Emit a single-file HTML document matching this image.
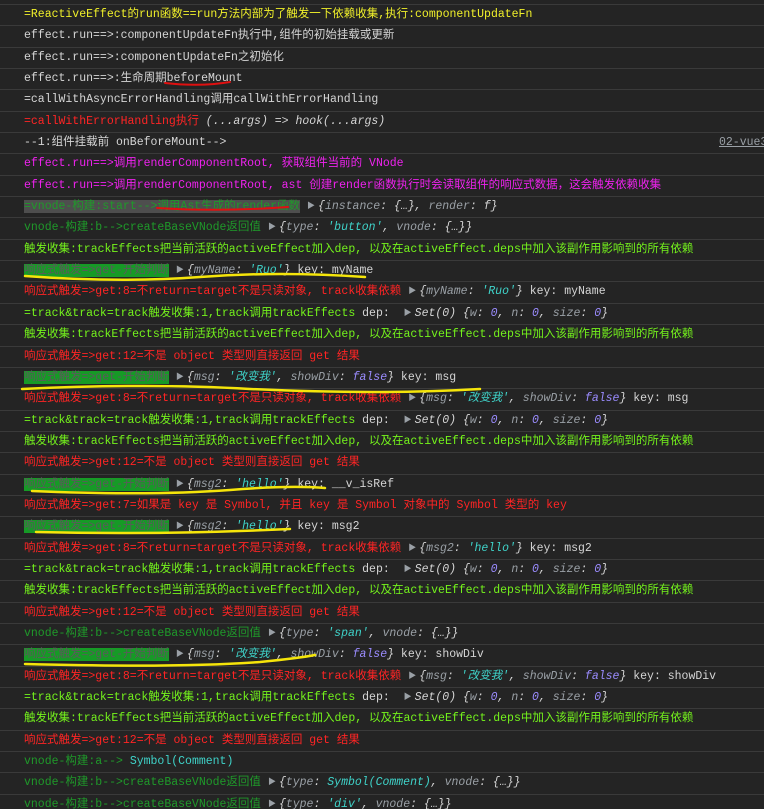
<!DOCTYPE html>
<html><head><meta charset="utf-8"><style>
html,body{margin:0;padding:0;background:#242424;width:764px;height:809px;overflow:hidden}
body{font-family:"Liberation Mono","Noto Sans CJK SC",monospace;font-size:11.5px;color:#d5d5d5;position:relative}
.wrap{position:absolute;top:4px;left:0;width:764px;border-top:1px solid #3a3a3a}
.row{height:20.35px;line-height:20.35px;border-bottom:1px solid #3a3a3a;padding-left:24px;white-space:nowrap;position:relative;overflow:hidden}
.y{color:#f0f02a}.r{color:#ff2424}.m{color:#ee22ee}.g{color:#74f21c}.dg{color:#1f9a2a}
.tag{background:#169a26;color:#5a5a5a;}
.st{background:#4e4e4e;color:#1f9a2a}
.o{font-style:italic;color:#d5d5d5}.k{color:#9aa0a6;font-style:italic}.s{color:#3fd3c9;font-style:italic}.n{color:#9b8cff;font-style:italic}
.t{color:#9aa0a6;font-size:8px;margin:0 3px 0 7px;vertical-align:1px}
.link{position:absolute;left:719px;top:0;color:#9aa0a6;text-decoration:underline}
svg{position:absolute;left:0;top:0}
</style></head><body>
<div class="wrap">
<div class="row y">=ReactiveEffect的run函数==run方法内部为了触发一下依赖收集,执行:componentUpdateFn</div>
<div class="row">effect.run==&gt;:componentUpdateFn执行中,组件的初始挂载或更新</div>
<div class="row">effect.run==&gt;:componentUpdateFn之初始化</div>
<div class="row">effect.run==&gt;:生命周期beforeMount</div>
<div class="row">=callWithAsyncErrorHandling调用callWithErrorHandling</div>
<div class="row"><span class="r">=callWithErrorHandling执行</span> <span class="o">(...args) =&gt; hook(...args)</span></div>
<div class="row">--1:组件挂载前 onBeforeMount--&gt;<span class="link">02-vue3</span></div>
<div class="row m">effect.run==&gt;调用renderComponentRoot, 获取组件当前的 VNode</div>
<div class="row m">effect.run==&gt;调用renderComponentRoot, ast 创建render函数执行时会读取组件的响应式数据，这会触发依赖收集</div>
<div class="row"><span class="st">=vnode-构建:start--&gt;调用Ast生成的render函数</span><span class="t">▶</span><span class="o">{<span class="k">instance</span>: {…}, <span class="k">render</span>: <i>f</i>}</span></div>
<div class="row"><span class="dg">vnode-构建:b--&gt;createBaseVNode返回值</span><span class="t">▶</span><span class="o">{<span class="k">type</span>: <span class="s">'button'</span>, <span class="k">vnode</span>: {…}}</span></div>
<div class="row g">触发收集:trackEffects把当前活跃的activeEffect加入dep, 以及在activeEffect.deps中加入该副作用影响到的所有依赖</div>
<div class="row"><span class="tag">响应式触发=&gt;get-开始判断</span><span class="t">▶</span><span class="o">{<span class="k">myName</span>: <span class="s">'Ruo'</span>}</span> key: myName</div>
<div class="row"><span class="r">响应式触发=&gt;get:8=不return=target不是只读对象, track收集依赖</span><span class="t">▶</span><span class="o">{<span class="k">myName</span>: <span class="s">'Ruo'</span>}</span> key: myName</div>
<div class="row"><span class="g">=track&amp;track=track触发收集:1,track调用trackEffects</span> dep: <span class="t">▶</span><span class="o">Set(0) {<span class="k">w</span>: <span class="n">0</span>, <span class="k">n</span>: <span class="n">0</span>, <span class="k">size</span>: <span class="n">0</span>}</span></div>
<div class="row g">触发收集:trackEffects把当前活跃的activeEffect加入dep, 以及在activeEffect.deps中加入该副作用影响到的所有依赖</div>
<div class="row r">响应式触发=&gt;get:12=不是 object 类型则直接返回 get 结果</div>
<div class="row"><span class="tag">响应式触发=&gt;get-开始判断</span><span class="t">▶</span><span class="o">{<span class="k">msg</span>: <span class="s">'改变我'</span>, <span class="k">showDiv</span>: <span class="n">false</span>}</span> key: msg</div>
<div class="row"><span class="r">响应式触发=&gt;get:8=不return=target不是只读对象, track收集依赖</span><span class="t">▶</span><span class="o">{<span class="k">msg</span>: <span class="s">'改变我'</span>, <span class="k">showDiv</span>: <span class="n">false</span>}</span> key: msg</div>
<div class="row"><span class="g">=track&amp;track=track触发收集:1,track调用trackEffects</span> dep: <span class="t">▶</span><span class="o">Set(0) {<span class="k">w</span>: <span class="n">0</span>, <span class="k">n</span>: <span class="n">0</span>, <span class="k">size</span>: <span class="n">0</span>}</span></div>
<div class="row g">触发收集:trackEffects把当前活跃的activeEffect加入dep, 以及在activeEffect.deps中加入该副作用影响到的所有依赖</div>
<div class="row r">响应式触发=&gt;get:12=不是 object 类型则直接返回 get 结果</div>
<div class="row"><span class="tag">响应式触发=&gt;get-开始判断</span><span class="t">▶</span><span class="o">{<span class="k">msg2</span>: <span class="s">'hello'</span>}</span> key: __v_isRef</div>
<div class="row r">响应式触发=&gt;get:7=如果是 key 是 Symbol, 并且 key 是 Symbol 对象中的 Symbol 类型的 key</div>
<div class="row"><span class="tag">响应式触发=&gt;get-开始判断</span><span class="t">▶</span><span class="o">{<span class="k">msg2</span>: <span class="s">'hello'</span>}</span> key: msg2</div>
<div class="row"><span class="r">响应式触发=&gt;get:8=不return=target不是只读对象, track收集依赖</span><span class="t">▶</span><span class="o">{<span class="k">msg2</span>: <span class="s">'hello'</span>}</span> key: msg2</div>
<div class="row"><span class="g">=track&amp;track=track触发收集:1,track调用trackEffects</span> dep: <span class="t">▶</span><span class="o">Set(0) {<span class="k">w</span>: <span class="n">0</span>, <span class="k">n</span>: <span class="n">0</span>, <span class="k">size</span>: <span class="n">0</span>}</span></div>
<div class="row g">触发收集:trackEffects把当前活跃的activeEffect加入dep, 以及在activeEffect.deps中加入该副作用影响到的所有依赖</div>
<div class="row r">响应式触发=&gt;get:12=不是 object 类型则直接返回 get 结果</div>
<div class="row"><span class="dg">vnode-构建:b--&gt;createBaseVNode返回值</span><span class="t">▶</span><span class="o">{<span class="k">type</span>: <span class="s">'span'</span>, <span class="k">vnode</span>: {…}}</span></div>
<div class="row"><span class="tag">响应式触发=&gt;get-开始判断</span><span class="t">▶</span><span class="o">{<span class="k">msg</span>: <span class="s">'改变我'</span>, <span class="k">showDiv</span>: <span class="n">false</span>}</span> key: showDiv</div>
<div class="row"><span class="r">响应式触发=&gt;get:8=不return=target不是只读对象, track收集依赖</span><span class="t">▶</span><span class="o">{<span class="k">msg</span>: <span class="s">'改变我'</span>, <span class="k">showDiv</span>: <span class="n">false</span>}</span> key: showDiv</div>
<div class="row"><span class="g">=track&amp;track=track触发收集:1,track调用trackEffects</span> dep: <span class="t">▶</span><span class="o">Set(0) {<span class="k">w</span>: <span class="n">0</span>, <span class="k">n</span>: <span class="n">0</span>, <span class="k">size</span>: <span class="n">0</span>}</span></div>
<div class="row g">触发收集:trackEffects把当前活跃的activeEffect加入dep, 以及在activeEffect.deps中加入该副作用影响到的所有依赖</div>
<div class="row r">响应式触发=&gt;get:12=不是 object 类型则直接返回 get 结果</div>
<div class="row"><span class="dg">vnode-构建:a--&gt;</span> <span class="s" style="font-style:normal">Symbol(Comment)</span></div>
<div class="row"><span class="dg">vnode-构建:b--&gt;createBaseVNode返回值</span><span class="t">▶</span><span class="o">{<span class="k">type</span>: <span class="s">Symbol(Comment)</span>, <span class="k">vnode</span>: {…}}</span></div>
<div class="row"><span class="dg">vnode-构建:b--&gt;createBaseVNode返回值</span><span class="t">▶</span><span class="o">{<span class="k">type</span>: <span class="s">'div'</span>, <span class="k">vnode</span>: {…}}</span></div>
</div>
<svg width="764" height="809" fill="none" stroke-linecap="round">
<path d="M165 83 Q200 87 230 82" stroke="#e01010" stroke-width="2"/>
<path d="M157 208 Q220 212 288 207" stroke="#e01010" stroke-width="2"/>
<g stroke="#f5e50a" stroke-width="2.5">
<path d="M25 276 Q120 283 200 277 Q280 271 365 277"/>
<path d="M22 389 Q150 383 250 389 Q380 395 480 389"/>
<path d="M32 491 Q150 496 230 490 Q290 485 325 488"/>
<path d="M36 532 Q160 535 290 529"/>
<path d="M25 664 Q180 668 260 662 Q300 658 315 655"/>
</g>
</svg>
</body></html>
